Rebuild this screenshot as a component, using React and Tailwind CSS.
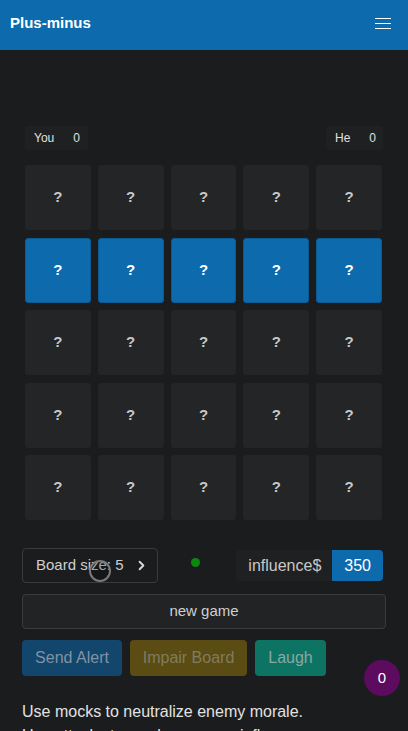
import { ChevronRight } from "lucide-react";

const rows = [0, 1, 2, 3, 4];
const cols = [0, 1, 2, 3, 4];

function Cell({ active }) {
  return (
    <div
      className={`h-[65px] rounded-[3px] flex items-center justify-center text-[15px] font-bold ${
        active ? "bg-[#0d6aad] border border-[#0a5a94] text-white" : "bg-[#242527] text-[#c8c8c8]"
      }`}
    >
      ?
    </div>
  );
}

export default function App() {
  return (
    <div className="bg-[#1b1c1e] font-['Liberation_Sans',Arial,sans-serif] overflow-hidden h-[731px]">
      <header className="h-[50px] bg-[#0d6aad] flex items-center justify-between pl-[10px] pr-[17px]">
        <h1 className="text-white font-bold text-[15px] pb-[4px]">Plus-minus</h1>
        <div className="flex flex-col gap-[4px] pb-[3px]">
          <span className="block w-[16px] h-px bg-white" />
          <span className="block w-[16px] h-px bg-white" />
          <span className="block w-[16px] h-px bg-white" />
        </div>
      </header>

      <main className="px-[22px] pt-[76px]">
        <div className="mx-[3px] flex justify-between">
          <div className="h-[24px] w-[63px] bg-[#1f2022] rounded-[3px] flex items-center gap-[19px] pl-[9px] text-[12px] text-[#e0e0e0]">
            <span>You</span>
            <span>0</span>
          </div>
          <div className="h-[24px] w-[57px] bg-[#1f2022] rounded-[3px] flex items-center gap-[19px] pl-[9px] text-[12px] text-[#e0e0e0]">
            <span>He</span>
            <span>0</span>
          </div>
        </div>

        <div className="ml-[3px] mr-[4px] mt-[15px] grid grid-cols-5 gap-x-[7px] gap-y-[7.5px]">
          {rows.map(r =>
            cols.map(c => <Cell key={`${r}-${c}`} active={r === 1} />)
          )}
        </div>

        <div className="mt-[28px] flex items-center">
          <button className="relative h-[35px] w-[136px] rounded-[4px] border border-[#3a3b3e] flex items-center pl-[13px] text-[15px] text-[#cfcfcf]">
            <span>Board size: 5</span>
            <ChevronRight size={15} strokeWidth={3} className="ml-[10px] text-[#d8d8d8]" />
            <span className="absolute left-[66px] top-[11px] w-[22px] h-[22px] rounded-full border-2 border-[#7a7a7a] bg-[#00000033]" />
          </button>
          <span className="ml-[33px] mb-[7px] w-[9px] h-[9px] rounded-full bg-[#0a8a0a]" />
          <div className="ml-auto mr-[3px] flex h-[31px] rounded-[4px] overflow-hidden text-[16px]">
            <span className="bg-[#1f2022] text-[#c8c8c8] flex items-center pl-[12px] pr-[11px]">influence$</span>
            <span className="bg-[#0d6aad] text-white flex items-center px-[12px]">350</span>
          </div>
        </div>

        <button className="mt-[11px] w-full h-[35px] rounded-[4px] border border-[#3a3b3e] bg-[#222325] text-[15px] text-[#cfcfcf]">
          new game
        </button>

        <div className="mt-[11px] flex gap-[8px]">
          <button className="h-[36px] w-[100px] rounded-[4px] bg-[#12466c] text-[#8193a4] text-[16px]">Send Alert</button>
          <button className="h-[36px] w-[117px] rounded-[4px] bg-[#5a4c12] text-[#817b60] text-[16px]">Impair Board</button>
          <button className="h-[36px] w-[71px] rounded-[4px] bg-[#0d7464] text-[#8aa8a2] text-[16px]">Laugh</button>
        </div>

        <div className="relative">
          <span className="absolute right-[-14px] top-[-16px] w-[36px] h-[36px] rounded-full bg-[#5c0b5e] text-white text-[15px] flex items-center justify-center">
            0
          </span>
        </div>

        <p className="mt-[24px] text-[16px] leading-[24px] text-[#e2e2e2]">
          Use mocks to neutralize enemy morale.
          <br />
          Use attacks to weaken enemy influence.
        </p>
      </main>
    </div>
  );
}
